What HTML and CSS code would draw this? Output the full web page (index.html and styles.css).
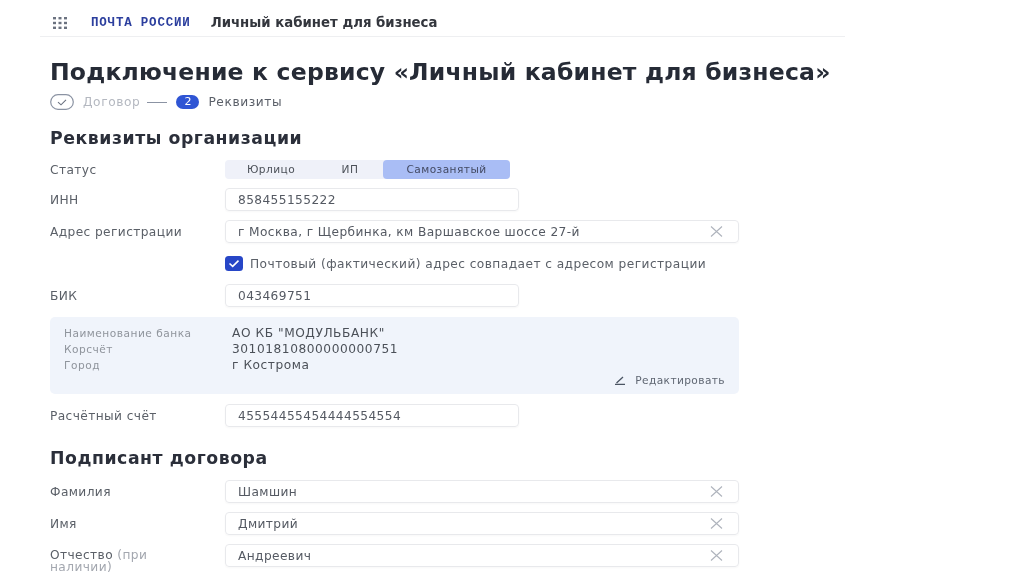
FILE: index.html
```html
<!DOCTYPE html>
<html lang="ru">
<head>
    <meta charset="UTF-8">
    <title>Подключение к сервису</title>
    <link rel="stylesheet" href="styles.css">
</head>
<body>

<div class="page">
    <header class="topbar">
        <svg class="apps" width="14" height="12" viewBox="0 0 14 12">
            <g fill="#6b7280">
                <rect x="0" y="0" width="3" height="2.4"/><rect x="5.5" y="0" width="3" height="2.4"/><rect x="11" y="0" width="3" height="2.4"/>
                <rect x="0" y="4.8" width="3" height="2.4"/><rect x="5.5" y="4.8" width="3" height="2.4"/><rect x="11" y="4.8" width="3" height="2.4"/>
                <rect x="0" y="9.6" width="3" height="2.4"/><rect x="5.5" y="9.6" width="3" height="2.4"/><rect x="11" y="9.6" width="3" height="2.4"/>
            </g>
        </svg>
        <span class="logo">ПОЧТА РОССИИ</span>
        <span class="service">Личный кабинет для бизнеса</span>
    </header>

    <main class="content">
        <h1>Подключение к сервису «Личный кабинет для бизнеса»</h1>

        <div class="steps">
            <svg class="step-done" width="24" height="16" viewBox="0 0 24 16">
                <rect x="0.7" y="0.7" width="22.6" height="14.6" rx="7.3" fill="none" stroke="#8b93a3" stroke-width="1.2"/>
                <path d="M8 8.2l3 2.6 5-5" fill="none" stroke="#6b7280" stroke-width="1.1"/>
            </svg>
            <span class="step-muted">Договор</span>
            <span class="step-line"></span>
            <span class="step-num">2</span>
            <span class="step-current">Реквизиты</span>
        </div>

        <h2 class="first">Реквизиты организации</h2>

        <div class="row row-status">
            <div class="label">Статус</div>
            <div class="tabs">
                <span class="tab tab-legal">Юрлицо</span>
                <span class="tab tab-ip">ИП</span>
                <span class="tab tab-active">Самозанятый</span>
            </div>
        </div>

        <div class="row">
            <div class="label">ИНН</div>
            <div class="field short">858455155222</div>
        </div>

        <div class="row">
            <div class="label">Адрес регистрации</div>
            <div class="field wide">г Москва, г Щербинка, км Варшавское шоссе 27-й
                <svg class="clear" width="13" height="11" viewBox="0 0 13 11"><path d="M1 .5l11 10M12 .5l-11 10" stroke="#aeb3bc" stroke-width="1.1" fill="none"/></svg>
            </div>
        </div>

        <div class="check-row">
            <svg width="18" height="15" viewBox="0 0 18 15">
                <rect width="18" height="15" rx="3.5" fill="#2746c7"/>
                <path d="M4.5 7.5l3.2 2.8 5.8-5.6" fill="none" stroke="#fff" stroke-width="1.6"/>
            </svg>
            <span>Почтовый (фактический) адрес совпадает с адресом регистрации</span>
        </div>

        <div class="row">
            <div class="label">БИК</div>
            <div class="field short">043469751</div>
        </div>

        <div class="bank">
            <div class="bank-grid">
                <div class="bank-label">Наименование банка</div>
                <div class="bank-value">АО КБ "МОДУЛЬБАНК"</div>
                <div class="bank-label">Корсчёт</div>
                <div class="bank-value">30101810800000000751</div>
                <div class="bank-label">Город</div>
                <div class="bank-value">г Кострома</div>
            </div>
            <div class="bank-edit">
                <svg width="12" height="10" viewBox="0 0 12 10"><path d="M1 9.3h10M2.5 8L9 2" fill="none" stroke="#4b5563" stroke-width="1.3"/></svg>
                <span>Редактировать</span>
            </div>
        </div>

        <div class="row">
            <div class="label">Расчётный счёт</div>
            <div class="field short">45554455454444554554</div>
        </div>

        <h2 class="second">Подписант договора</h2>

        <div class="row">
            <div class="label">Фамилия</div>
            <div class="field wide">Шамшин
                <svg class="clear" width="13" height="11" viewBox="0 0 13 11"><path d="M1 .5l11 10M12 .5l-11 10" stroke="#aeb3bc" stroke-width="1.1" fill="none"/></svg>
            </div>
        </div>

        <div class="row">
            <div class="label">Имя</div>
            <div class="field wide">Дмитрий
                <svg class="clear" width="13" height="11" viewBox="0 0 13 11"><path d="M1 .5l11 10M12 .5l-11 10" stroke="#aeb3bc" stroke-width="1.1" fill="none"/></svg>
            </div>
        </div>

        <div class="row">
            <div class="label label-two">Отчество <span class="optional">(при</span><br><span class="optional">наличии)</span></div>
            <div class="field wide">Андреевич
                <svg class="clear" width="13" height="11" viewBox="0 0 13 11"><path d="M1 .5l11 10M12 .5l-11 10" stroke="#aeb3bc" stroke-width="1.1" fill="none"/></svg>
            </div>
        </div>
    </main>
</div>

</body>
</html>
```

FILE: styles.css
```css
body {
    margin: 0;
    height: 574px;
    overflow: hidden;
    background-color: #fff;
    font-family: "DejaVu Sans", sans-serif;
    color: #4b5058;
}
.page {
    width: 805px;
    margin-left: 40px;
    filter: blur(0.35px);
}
.topbar {
    display: flex;
    align-items: center;
    height: 37px;
    box-sizing: border-box;
    padding: 9px 0 0 13px;
    border-bottom: 1px solid #eeeff1;
}
.logo {
    margin-left: 24px;
    font-family: "Liberation Mono", monospace;
    font-size: 12.5px;
    font-weight: bold;
    letter-spacing: 0.8px;
    color: #2c3f9e;
}
.service {
    margin-left: 20px;
    font-size: 13.3px;
    font-weight: bold;
    color: #33363d;
}
.content {
    padding-left: 10px;
}
h1 {
    margin: 22px 0 0;
    height: 26px;
    font-size: 23.5px;
    line-height: 26px;
    font-weight: bold;
    letter-spacing: 0.2px;
    color: #262b36;
    white-space: nowrap;
}
.steps {
    display: flex;
    align-items: center;
    height: 16px;
    margin-top: 9px;
    font-size: 12.2px;
    letter-spacing: 0.6px;
}
.step-muted {
    margin-left: 9px;
    color: #b4b8c0;
}
.step-line {
    width: 20px;
    height: 1px;
    margin: 0 9px 0 7px;
    background-color: #8b93a3;
}
.step-num {
    width: 23px;
    height: 14px;
    border-radius: 7px;
    background-color: #2f55d4;
    color: #fff;
    font-size: 11px;
    letter-spacing: 0;
    line-height: 14px;
    text-align: center;
}
.step-current {
    margin-left: 9px;
    color: #5a5f68;
}
h2 {
    margin: 0;
    font-size: 17.3px;
    line-height: 20px;
    font-weight: bold;
    letter-spacing: 0.55px;
    color: #2b2f3a;
}
h2.first {
    margin-top: 18px;
    margin-bottom: 12px;
}
h2.second {
    margin-top: 21px;
    margin-bottom: 12px;
}
.row {
    display: grid;
    grid-template-columns: 175px 1fr;
    align-items: center;
    min-height: 23px;
    margin-bottom: 9px;
}
.row-status {
    min-height: 19px;
}
.label {
    font-size: 12.2px;
    letter-spacing: 0.4px;
    color: #5b6068;
}
.label-two {
    align-self: start;
    height: 23px;
    box-sizing: border-box;
    padding-top: 5px;
    line-height: 12px;
}
.optional {
    color: #a3a7af;
}
.tabs {
    display: flex;
    width: 285px;
    height: 19px;
    border-radius: 4px;
    background-color: #eff1f9;
    font-size: 10.6px;
    letter-spacing: 0.45px;
    line-height: 19px;
    text-align: center;
}
.tab-legal {
    width: 92px;
}
.tab-ip {
    width: 66px;
}
.tab-active {
    width: 127px;
    border-radius: 4px;
    background-color: #a9bdf5;
    color: #434a63;
}
.field {
    position: relative;
    height: 23px;
    box-sizing: border-box;
    padding-left: 12px;
    border: 1px solid #e8e9ec;
    border-radius: 4px;
    font-size: 12.2px;
    letter-spacing: 0.4px;
    line-height: 22px;
    color: #545962;
    box-shadow: 0 1px 2px rgba(0, 0, 0, 0.03);
}
.short {
    width: 294px;
}
.wide {
    width: 514px;
}
.clear {
    position: absolute;
    right: 15px;
    top: 5px;
}
.check-row {
    display: flex;
    align-items: center;
    height: 17px;
    margin: 12px 0 12px 175px;
    font-size: 12.2px;
    letter-spacing: 0.44px;
    color: #5b6068;
}
.check-row span {
    margin-left: 7px;
}
.bank {
    width: 689px;
    height: 77px;
    box-sizing: border-box;
    margin: 10px 0;
    padding: 8px 14px 0;
    border-radius: 5px;
    background-color: #f0f4fb;
}
.bank-grid {
    display: grid;
    grid-template-columns: 168px 1fr;
    grid-auto-rows: 16px;
    align-items: center;
}
.bank-label {
    font-size: 10.6px;
    letter-spacing: 0.5px;
    color: #8f949c;
}
.bank-value {
    font-size: 12.2px;
    letter-spacing: 0.55px;
    color: #4b5058;
}
.bank-edit {
    display: flex;
    align-items: center;
    justify-content: flex-end;
    margin-top: 1px;
    font-size: 10.6px;
    letter-spacing: 0.4px;
    color: #5f6672;
}
.bank-edit span {
    margin-left: 9px;
}
```
